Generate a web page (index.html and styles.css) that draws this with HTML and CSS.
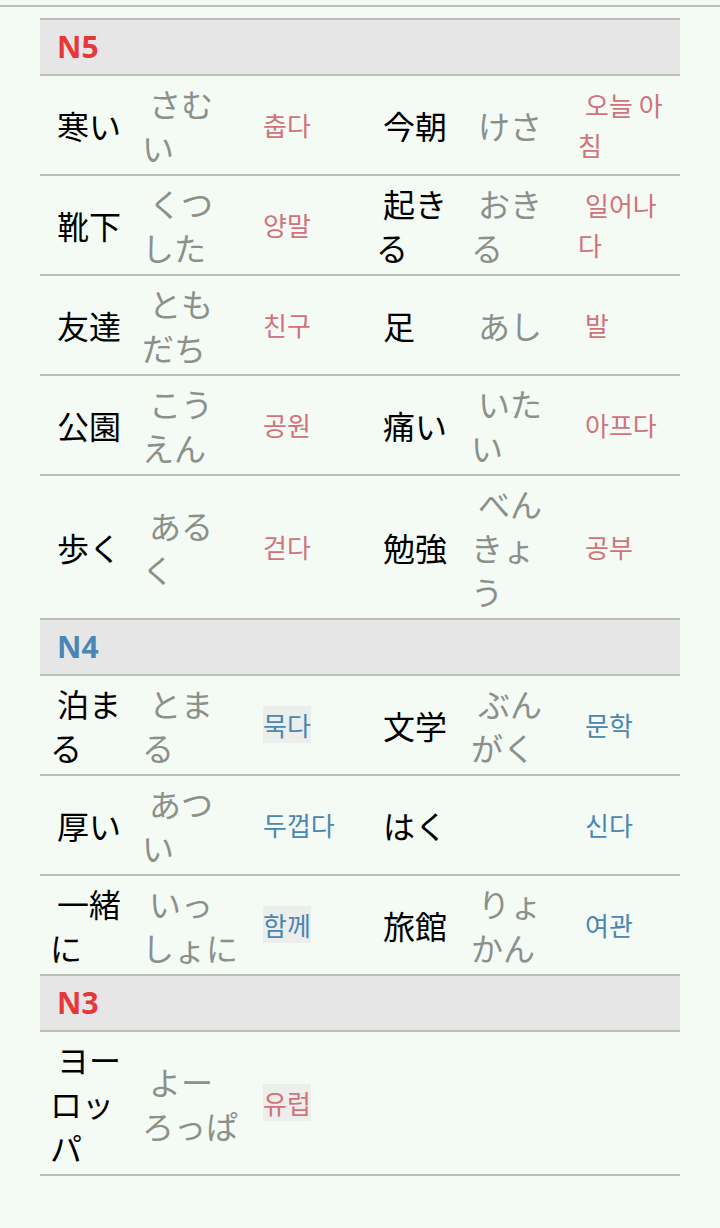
FILE: index.html
```html
<!DOCTYPE html>
<html lang="ja">
<head>
    <meta charset="UTF-8">
    <meta name="viewport" content="width=device-width, initial-scale=1.0">
    <title>単語</title>
    <link rel="stylesheet" href="styles.css">
</head>
<body>
    <div class="topbar"></div>
    <table class="vocab">
        <colgroup>
            <col class="c1"><col class="c2"><col class="c3">
            <col class="c4"><col class="c5"><col class="c6">
        </colgroup>
        <tr class="level"><td colspan="6" class="red">N5</td></tr>
        <tr>
            <td class="word">寒い</td><td class="kana">さむい</td><td class="ko red">춥다</td>
            <td class="word">今朝</td><td class="kana">けさ</td><td class="ko red">오늘 아침</td>
        </tr>
        <tr>
            <td class="word">靴下</td><td class="kana">くつした</td><td class="ko red">양말</td>
            <td class="word">起きる</td><td class="kana">おきる</td><td class="ko red">일어나다</td>
        </tr>
        <tr>
            <td class="word">友達</td><td class="kana">ともだち</td><td class="ko red">친구</td>
            <td class="word">足</td><td class="kana">あし</td><td class="ko red">발</td>
        </tr>
        <tr>
            <td class="word">公園</td><td class="kana">こうえん</td><td class="ko red">공원</td>
            <td class="word">痛い</td><td class="kana">いたい</td><td class="ko red">아프다</td>
        </tr>
        <tr>
            <td class="word">歩く</td><td class="kana">あるく</td><td class="ko red">걷다</td>
            <td class="word">勉強</td><td class="kana">べんきょう</td><td class="ko red">공부</td>
        </tr>
        <tr class="level"><td colspan="6" class="blue">N4</td></tr>
        <tr>
            <td class="word">泊まる</td><td class="kana">とまる</td><td class="ko blue"><span class="mark">묵다</span></td>
            <td class="word">文学</td><td class="kana">ぶんがく</td><td class="ko blue">문학</td>
        </tr>
        <tr>
            <td class="word">厚い</td><td class="kana">あつい</td><td class="ko blue">두껍다</td>
            <td class="word">はく</td><td class="kana"></td><td class="ko blue">신다</td>
        </tr>
        <tr>
            <td class="word">一緒に</td><td class="kana">いっしょに</td><td class="ko blue"><span class="mark">함께</span></td>
            <td class="word">旅館</td><td class="kana">りょかん</td><td class="ko blue">여관</td>
        </tr>
        <tr class="level"><td colspan="6" class="red">N3</td></tr>
        <tr>
            <td class="word">ヨーロッパ</td><td class="kana">よーろっぱ</td><td class="ko red"><span class="mark">유럽</span></td>
            <td></td><td></td><td></td>
        </tr>
    </table>
</body>
</html>
```

FILE: styles.css
```css
body {
    margin: 0;
    background-color: #f4faf4;
    font-family: "Noto Sans CJK JP", sans-serif;
}
.topbar {
    height: 5px;
    border-bottom: 2px solid #bcc1ba;
}
.vocab {
    width: 640px;
    margin: 11px 40px 0;
    border-collapse: collapse;
    table-layout: fixed;
}
.c1 { width: 92px; }
.c2 { width: 114px; }
.c3 { width: 120px; }
.c4 { width: 95px; }
.c5 { width: 107px; }
.c6 { width: 112px; }
.vocab td {
    padding: 5px 6px 5px 10px;
    border-top: 2px solid #b9beb7;
    border-bottom: 2px solid #b9beb7;
    text-indent: 7px;
    vertical-align: middle;
    font-size: 32px;
    line-height: 44px;
}
.level td {
    background-color: #e6e6e6;
    font-family: "Open Sans", Roboto, sans-serif;
    font-weight: bold;
    font-size: 30px;
}
.word {
    color: #000;
}
.kana {
    color: #8b908b;
}
.vocab td.ko {
    font-family: "Noto Sans CJK KR", sans-serif;
    font-size: 26px;
    line-height: 40px;
}
.red {
    color: #e63838;
}
.blue {
    color: #4a86b3;
}
.ko.red {
    color: #d0737b;
}
.ko.blue {
    color: #4b87b1;
}
.mark {
    background-color: #eceeec;
}
```
